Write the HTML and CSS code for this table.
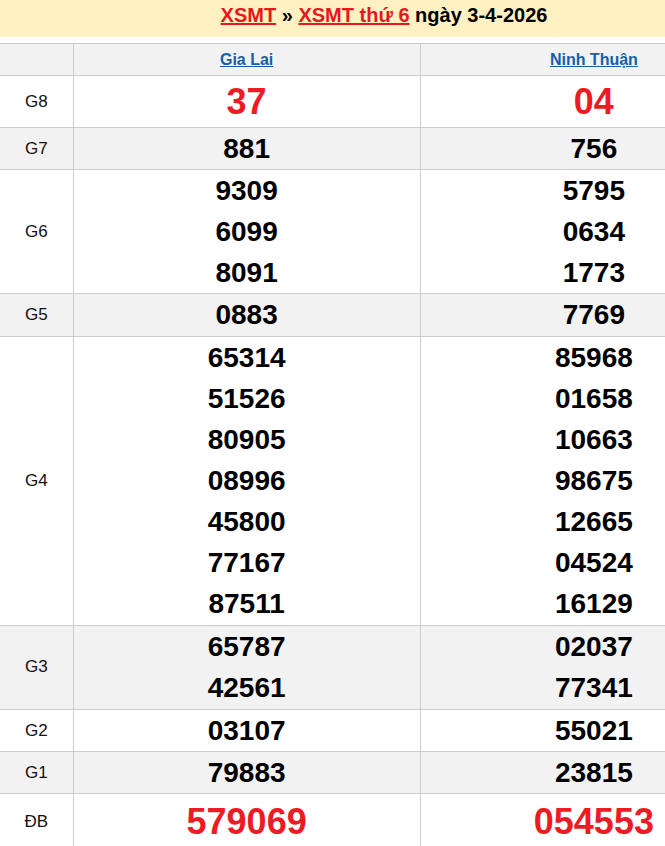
FILE: index.html
```html
<!DOCTYPE html>
<html lang="vi">
<head>
<meta charset="utf-8">
<title>XSMT thứ 6 ngày 3-4-2026</title>
<link rel="stylesheet" href="styles.css">
</head>
<body>
<div class="wrap">
  <h2 class="title"><a href="#">XSMT</a> » <a href="#">XSMT thứ 6</a> ngày 3-4-2026</h2>
  <table class="kq">
    <colgroup><col class="c-lbl"><col class="c-prov"><col class="c-prov"></colgroup>
    <tr class="alt head">
      <th></th>
      <th><a href="#">Gia Lai</a></th>
      <th><a href="#">Ninh Thuận</a></th>
    </tr>
    <tr class="g8">
      <td class="lbl">G8</td>
      <td><div class="n big red">37</div></td>
      <td><div class="n big red">04</div></td>
    </tr>
    <tr class="alt">
      <td class="lbl">G7</td>
      <td><div class="n">881</div></td>
      <td><div class="n">756</div></td>
    </tr>
    <tr>
      <td class="lbl">G6</td>
      <td><div class="n">9309</div><div class="n">6099</div><div class="n">8091</div></td>
      <td><div class="n">5795</div><div class="n">0634</div><div class="n">1773</div></td>
    </tr>
    <tr class="alt tall">
      <td class="lbl">G5</td>
      <td><div class="n">0883</div></td>
      <td><div class="n">7769</div></td>
    </tr>
    <tr class="tall">
      <td class="lbl">G4</td>
      <td><div class="n">65314</div><div class="n">51526</div><div class="n">80905</div><div class="n">08996</div><div class="n">45800</div><div class="n">77167</div><div class="n">87511</div></td>
      <td><div class="n">85968</div><div class="n">01658</div><div class="n">10663</div><div class="n">98675</div><div class="n">12665</div><div class="n">04524</div><div class="n">16129</div></td>
    </tr>
    <tr class="alt tall">
      <td class="lbl">G3</td>
      <td><div class="n">65787</div><div class="n">42561</div></td>
      <td><div class="n">02037</div><div class="n">77341</div></td>
    </tr>
    <tr>
      <td class="lbl">G2</td>
      <td><div class="n">03107</div></td>
      <td><div class="n">55021</div></td>
    </tr>
    <tr class="alt">
      <td class="lbl">G1</td>
      <td><div class="n">79883</div></td>
      <td><div class="n">23815</div></td>
    </tr>
    <tr class="db">
      <td class="lbl">ĐB</td>
      <td><div class="n big red">579069</div></td>
      <td><div class="n big red">054553</div></td>
    </tr>
  </table>
</div>
</body>
</html>
```

FILE: styles.css
```css
html, body {
  margin: 0;
  padding: 0;
  background: #fff;
}
body {
  font-family: "Liberation Sans", Arial, sans-serif;
  color: #000;
}
.wrap {
  width: 768px;
}
.title {
  margin: 0 0 6px;
  background: #fff1c1;
  height: 37px;
  box-sizing: border-box;
  padding-top: 1px;
  line-height: 28px;
  font-size: 20px;
  font-weight: bold;
  text-align: center;
  color: #000;
}
.title a {
  color: #e8171f;
  text-decoration: underline;
}
.kq {
  width: 768px;
  border-collapse: collapse;
  table-layout: fixed;
}
.c-lbl { width: 73px; }
.kq th, .kq td {
  border: 1px solid #cccccc;
  padding: 0;
  text-align: center;
  vertical-align: middle;
}
.kq tr > :first-child { border-left: none; }
.kq tr.alt { background: #f2f2f2; }
.kq tr.tall td { padding-bottom: 1px; }
.head th {
  height: 31px;
  font-size: 16px;
  font-weight: bold;
}
.head a {
  color: #1560a8;
  text-decoration: underline;
}
.lbl {
  font-size: 17px;
  color: #111;
}
.n {
  font-size: 28px;
  font-weight: bold;
  line-height: 41px;
}
.n.big {
  font-size: 36px;
  line-height: 51px;
}
.db .n.big {
  line-height: 56px;
}
.red { color: #ed1c24; }
```
